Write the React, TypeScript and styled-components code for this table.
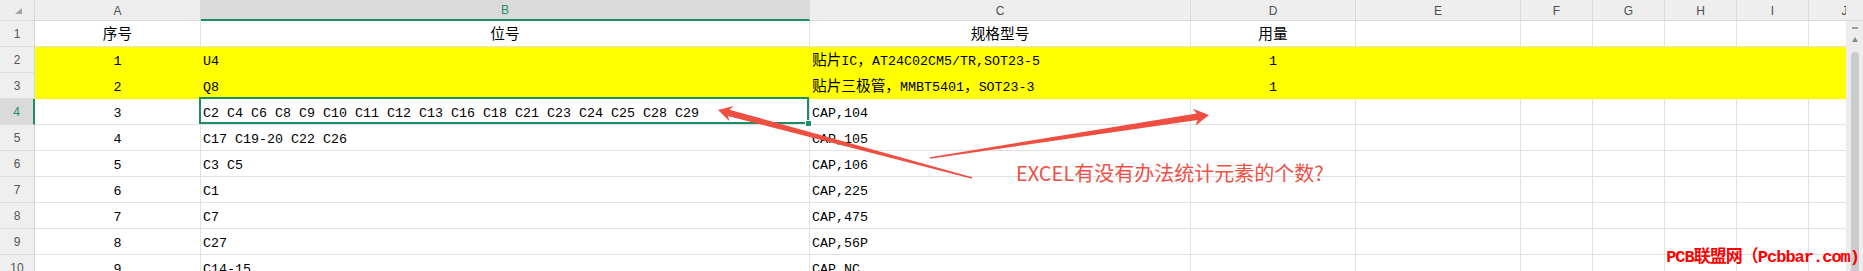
import React from "react";
import styled, { createGlobalStyle } from "styled-components";

const GREEN = "#1b8f63";
const GRID = "#e1e1e1";
const YELLOW = "#ffff00";
const COLS = "35px 166px 609px 381px 165px 165px 72px 72px 72px 72px 72px";
const TOTAL = 1881;
const LETTERS = ["A", "B", "C", "D", "E", "F", "G", "H", "I", "J"];
const EXTRA = ["E", "F", "G", "H", "I", "J"];

const GlobalStyle = createGlobalStyle`
  html, body { margin: 0; padding: 0; background: #ffffff; }
  body { overflow: hidden; }
`;

const Sheet = styled.div`
  position: relative;
  width: 1863px;
  height: 271px;
  overflow: hidden;
  display: flex;
  flex-direction: column;
  background: #ffffff;
`;

const Top = styled.div`
  display: flex;
  flex: none;
  height: 21px;
  background: #eeeeee;
`;

const HeaderTrack = styled.div`
  flex: 1;
  min-width: 0;
  overflow: hidden;
`;

const ColumnGrid = styled.div`
  display: grid;
  grid-template-columns: ${COLS};
  width: ${TOTAL}px;
`;

const Corner = styled.div`
  box-sizing: border-box;
  height: 21px;
  display: flex;
  align-items: center;
  justify-content: center;
  padding: 1px 0 0 2px;
  border-right: 1px solid #d9d9d9;
  border-bottom: 1px solid #d9d9d9;
`;

const ColHead = styled.div<{ $active?: boolean }>`
  box-sizing: border-box;
  height: 21px;
  display: flex;
  align-items: center;
  justify-content: center;
  padding-top: 1px;
  border-right: 1px solid #dadada;
  border-bottom: ${(p) => (p.$active ? `2px solid ${GREEN}` : "1px solid #d9d9d9")};
  background: ${(p) => (p.$active ? "#dadada" : "#eeeeee")};
  color: ${(p) => (p.$active ? GREEN : "#505050")};
  font-family: "Liberation Sans", Arial, sans-serif;
  font-size: 12px;
`;

const ScrollCap = styled.div`
  flex: none;
  width: 17px;
  box-sizing: border-box;
  background: #eeeeee;
  border-bottom: 1px solid #d9d9d9;
`;

const Body = styled.div`
  display: flex;
  flex: 1;
  min-height: 0;
`;

const RowsTrack = styled.div`
  flex: 1;
  min-width: 0;
  overflow: hidden;
`;

const Row = styled.div`
  display: grid;
  grid-template-columns: ${COLS};
  width: ${TOTAL}px;
  height: 26px;
`;

const RowHead = styled.div<{ $active?: boolean }>`
  box-sizing: border-box;
  height: 26px;
  display: flex;
  align-items: center;
  justify-content: center;
  background: ${(p) => (p.$active ? "#dadada" : "#efefef")};
  border-right: ${(p) => (p.$active ? `2px solid ${GREEN}` : "1px solid #d6d6d6")};
  border-bottom: 1px solid #dcdcdc;
  color: ${(p) => (p.$active ? GREEN : "#555555")};
  font-family: "Liberation Sans", Arial, sans-serif;
  font-size: 12px;
`;

const Cell = styled.div<{ $fill?: boolean; $align?: "left" | "center"; $selected?: boolean }>`
  box-sizing: border-box;
  height: 26px;
  min-width: 0;
  padding: 6px 2px 0 2px;
  text-align: ${(p) => (p.$align === "center" ? "center" : "left")};
  white-space: nowrap;
  background: ${(p) => (p.$fill ? YELLOW : "#ffffff")};
  border-right: 1px solid ${(p) => (p.$fill ? YELLOW : GRID)};
  border-bottom: 1px solid ${(p) => (p.$fill ? YELLOW : GRID)};
  font-family: "Liberation Mono", "Noto Sans CJK SC", monospace;
  font-size: 13.33px;
  line-height: 18px;
  color: #000000;
  ${(p) =>
    p.$selected
      ? `
    position: relative;
    z-index: 1;
    &::after {
      content: "";
      position: absolute;
      left: -2px;
      top: -2px;
      right: 0;
      bottom: 0;
      border: 2px solid ${GREEN};
    }
    &::before {
      content: "";
      position: absolute;
      right: -3px;
      bottom: -3px;
      width: 5px;
      height: 5px;
      background: ${GREEN};
      border: 1px solid #ffffff;
      z-index: 2;
    }
  `
      : ""}
`;

const Han = styled.span<{ $size: number }>`
  font-family: "Noto Sans CJK SC", sans-serif;
  font-size: ${(p) => p.$size}px;
  line-height: 12px;
`;

const VScroll = styled.div`
  flex: none;
  width: 17px;
  box-sizing: border-box;
  display: flex;
  flex-direction: column;
  align-items: center;
  padding-top: 6px;
  background: #ededed;
`;

const ScrollMin = styled.div`
  flex: none;
  width: 6px;
  height: 2px;
  margin-bottom: 8px;
  background: #9b9b9b;
`;

const ScrollUp = styled.svg`
  flex: none;
  margin-bottom: 10px;
`;

const Thumb = styled.div`
  flex: 1;
  width: 8px;
  background: #c9cbce;
  border-radius: 4px 4px 0 0;
`;

const Overlay = styled.svg`
  position: absolute;
  left: 0;
  top: 0;
  z-index: 3;
  pointer-events: none;
`;

const Callout = styled.div`
  position: absolute;
  left: 1016px;
  top: 163px;
  z-index: 3;
  white-space: nowrap;
  font-family: "Noto Sans CJK SC", sans-serif;
  font-size: 20px;
  line-height: 20px;
  color: #ef5046;
`;

const Watermark = styled.div`
  position: absolute;
  right: 4px;
  top: 249px;
  z-index: 3;
  white-space: nowrap;
  font-family: "Liberation Mono", monospace;
  font-weight: 700;
  font-size: 17px;
  letter-spacing: -1px;
  line-height: 17px;
  color: #ff0000;
`;

const HAN = /([\u2E80-\u9FFF\uFF00-\uFFEF]+)/;

function rich(text: string, size = 14.67) {
  return text
    .split(HAN)
    .filter((s) => s.length > 0)
    .map((part, i) =>
      HAN.test(part) ? (
        <Han key={i} $size={size}>
          {part}
        </Han>
      ) : (
        <React.Fragment key={i}>{part}</React.Fragment>
      )
    );
}

type Pt = [number, number];

function arrow(t: Pt, p: Pt, join: number, back: number, wing: number, shaft: number, tail: number) {
  const dx = p[0] - t[0];
  const dy = p[1] - t[1];
  const L = Math.hypot(dx, dy);
  const ux = dx / L;
  const uy = dy / L;
  const nx = -uy;
  const ny = ux;
  const jx = p[0] - ux * join;
  const jy = p[1] - uy * join;
  const wx = p[0] - ux * back;
  const wy = p[1] - uy * back;
  const pts: Pt[] = [
    [t[0] + nx * tail, t[1] + ny * tail],
    [jx + nx * shaft, jy + ny * shaft],
    [wx + nx * wing, wy + ny * wing],
    p,
    [wx - nx * wing, wy - ny * wing],
    [jx - nx * shaft, jy - ny * shaft],
    [t[0] - nx * tail, t[1] - ny * tail],
  ];
  return pts.map(([x, y]) => `${x.toFixed(1)},${y.toFixed(1)}`).join(" ");
}

type RowData = {
  a: string;
  b: string;
  c: string;
  d: string;
  head?: boolean;
  fill?: boolean;
  active?: boolean;
};

const ROWS: RowData[] = [
  { a: "序号", b: "位号", c: "规格型号", d: "用量", head: true },
  { a: "1", b: "U4", c: "贴片IC，AT24C02CM5/TR,SOT23-5", d: "1", fill: true },
  { a: "2", b: "Q8", c: "贴片三极管，MMBT5401，SOT23-3", d: "1", fill: true },
  {
    a: "3",
    b: "C2 C4 C6 C8 C9 C10 C11 C12 C13 C16 C18 C21 C23 C24 C25 C28 C29",
    c: "CAP,104",
    d: "",
    active: true,
  },
  { a: "4", b: "C17 C19-20 C22 C26", c: "CAP,105", d: "" },
  { a: "5", b: "C3 C5", c: "CAP,106", d: "" },
  { a: "6", b: "C1", c: "CAP,225", d: "" },
  { a: "7", b: "C7", c: "CAP,475", d: "" },
  { a: "8", b: "C27", c: "CAP,56P", d: "" },
  { a: "9", b: "C14-15", c: "CAP,NC", d: "" },
];

export default function App() {
  return (
    <>
      <GlobalStyle />
      <Sheet>
        <Top>
          <HeaderTrack>
            <ColumnGrid>
              <Corner>
                <svg width="7" height="6" viewBox="0 0 7 6">
                  <polygon points="7,0 7,6 0,6" fill="#a3a3a3" />
                </svg>
              </Corner>
              {LETTERS.map((l) => (
                <ColHead key={l} $active={l === "B"}>
                  {l}
                </ColHead>
              ))}
            </ColumnGrid>
          </HeaderTrack>
          <ScrollCap />
        </Top>
        <Body>
          <RowsTrack>
            {ROWS.map((r, i) => (
              <Row key={i}>
                <RowHead $active={r.active}>{i + 1}</RowHead>
                <Cell $fill={r.fill} $align="center">
                  {rich(r.a)}
                </Cell>
                <Cell $fill={r.fill} $align={r.head ? "center" : "left"} $selected={r.active}>
                  {rich(r.b)}
                </Cell>
                <Cell $fill={r.fill} $align={r.head ? "center" : "left"}>
                  {rich(r.c)}
                </Cell>
                <Cell $fill={r.fill} $align="center">
                  {rich(r.d)}
                </Cell>
                {EXTRA.map((k) => (
                  <Cell key={k} $fill={r.fill} />
                ))}
              </Row>
            ))}
          </RowsTrack>
          <VScroll>
            <ScrollMin />
            <ScrollUp width="6" height="5" viewBox="0 0 6 5">
              <polygon points="3,0 6,5 0,5" fill="#8a8a8a" />
            </ScrollUp>
            <Thumb />
          </VScroll>
        </Body>
        <Overlay width="1863" height="271" viewBox="0 0 1863 271">
          <polygon points={arrow([972, 178], [718, 110], 11, 14, 7.8, 3.3, 0.8)} fill="#ee4f40" />
          <polygon points={arrow([930, 158], [1209, 115], 12, 15, 8.6, 3.3, 0.8)} fill="#ee4f40" />
        </Overlay>
        <Callout>EXCEL有没有办法统计元素的个数?</Callout>
        <Watermark>{rich("PCB联盟网（Pcbbar.com)", 17)}</Watermark>
      </Sheet>
    </>
  );
}
